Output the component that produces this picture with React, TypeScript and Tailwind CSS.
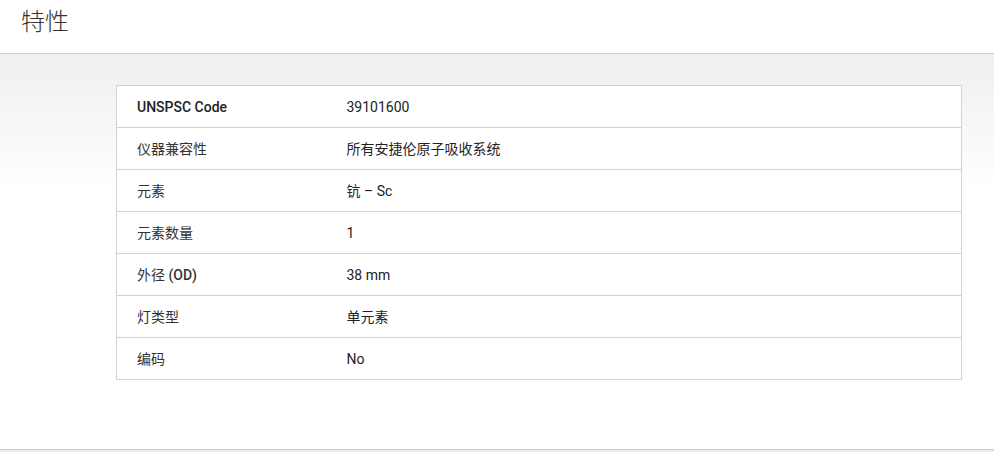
const rows: { label: React.ReactNode; value: string; bold?: boolean }[] = [
  { label: 'UNSPSC Code', value: '39101600', bold: true },
  { label: '仪器兼容性', value: '所有安捷伦原子吸收系统' },
  { label: '元素', value: '钪 – Sc' },
  { label: '元素数量', value: '1' },
  { label: <>外径 <b className="font-medium">(OD)</b></>, value: '38 mm' },
  { label: '灯类型', value: '单元素' },
  { label: '编码', value: 'No' },
]

export default function App() {
  return (
    <div
      className="w-[994px] h-[452px] overflow-hidden bg-white text-[#333]"
      style={{ fontFamily: 'Roboto, "Noto Sans CJK SC", sans-serif' }}
    >
      <div className="h-[54px] border-b border-[#cfcfcf] px-[21px] pt-[6px]">
        <h1 className="text-[24px] leading-[32px] text-[#333] font-light">特性</h1>
      </div>
      <div className="h-[396px] border-b border-[#cccccc] bg-gradient-to-b from-[#eeeff1] to-white to-[35%] pt-[31px] pl-[116px] pr-[32px]">
        <table className="w-[846px] border-collapse bg-white text-[14px]">
          <tbody>
            {rows.map((r, i) => (
              <tr key={i} className="h-[42px] border border-[#d2d2d2]">
                <td className={`w-[210px] pl-[20px] pt-[2px] align-middle ${r.bold ? 'font-medium text-[#222]' : ''}`}>
                  {r.label}
                </td>
                <td className="pl-[20px] pt-[2px] align-middle text-[#222]">{r.value}</td>
              </tr>
            ))}
          </tbody>
        </table>
      </div>
      <div className="h-[2px] bg-[#ececec]" />
    </div>
  )
}
